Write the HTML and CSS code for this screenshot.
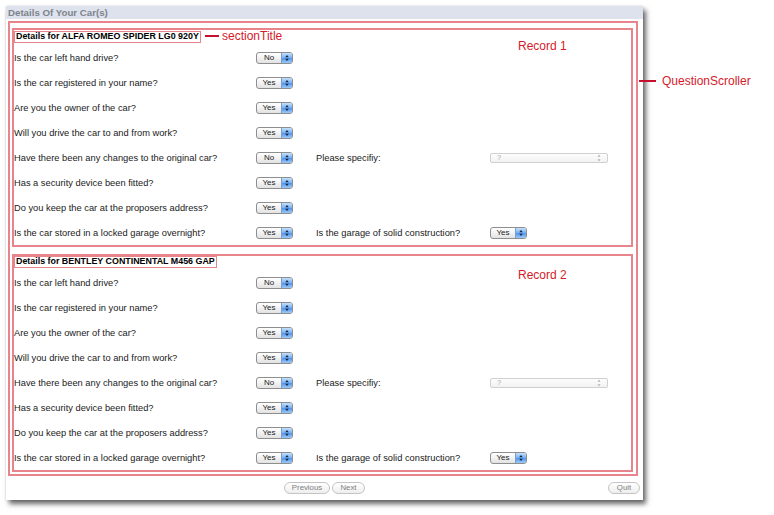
FILE: index.html
```html
<!DOCTYPE html>
<html>
<head>
<meta charset="utf-8">
<link rel="stylesheet" href="styles.css">
</head>
<body>
<div class="window">
  <div class="titlebar">Details Of Your Car(s)</div>
  <div class="scroller">
    <section class="record">
      <div class="rec-title">Details for ALFA ROMEO SPIDER LG0 920Y</div>
      <div class="row"><span class="q">Is the car left hand drive?</span><span class="sel"><span class="val">No</span><span class="step"><svg width="10" height="10" viewBox="0 0 10 10"><path d="M5 2 L3.2 4.2 H6.8 Z M3.2 5.8 H6.8 L5 8 Z" fill="#1c2b45"/></svg></span></span></div>
      <div class="row"><span class="q">Is the car registered in your name?</span><span class="sel"><span class="val">Yes</span><span class="step"><svg width="10" height="10" viewBox="0 0 10 10"><path d="M5 2 L3.2 4.2 H6.8 Z M3.2 5.8 H6.8 L5 8 Z" fill="#1c2b45"/></svg></span></span></div>
      <div class="row"><span class="q">Are you the owner of the car?</span><span class="sel"><span class="val">Yes</span><span class="step"><svg width="10" height="10" viewBox="0 0 10 10"><path d="M5 2 L3.2 4.2 H6.8 Z M3.2 5.8 H6.8 L5 8 Z" fill="#1c2b45"/></svg></span></span></div>
      <div class="row"><span class="q">Will you drive the car to and from work?</span><span class="sel"><span class="val">Yes</span><span class="step"><svg width="10" height="10" viewBox="0 0 10 10"><path d="M5 2 L3.2 4.2 H6.8 Z M3.2 5.8 H6.8 L5 8 Z" fill="#1c2b45"/></svg></span></span></div>
      <div class="row"><span class="q">Have there been any changes to the original car?</span><span class="sel"><span class="val">No</span><span class="step"><svg width="10" height="10" viewBox="0 0 10 10"><path d="M5 2 L3.2 4.2 H6.8 Z M3.2 5.8 H6.8 L5 8 Z" fill="#1c2b45"/></svg></span></span><span class="q2">Please specifiy:</span><span class="wide"><span class="wval">?</span><svg width="8" height="10" viewBox="0 0 8 10"><path d="M4 1.5 L2.5 3.8 H5.5 Z M2.5 6.2 H5.5 L4 8.5 Z" fill="#b4b4b4"/></svg></span></div>
      <div class="row"><span class="q">Has a security device been fitted?</span><span class="sel"><span class="val">Yes</span><span class="step"><svg width="10" height="10" viewBox="0 0 10 10"><path d="M5 2 L3.2 4.2 H6.8 Z M3.2 5.8 H6.8 L5 8 Z" fill="#1c2b45"/></svg></span></span></div>
      <div class="row"><span class="q">Do you keep the car at the proposers address?</span><span class="sel"><span class="val">Yes</span><span class="step"><svg width="10" height="10" viewBox="0 0 10 10"><path d="M5 2 L3.2 4.2 H6.8 Z M3.2 5.8 H6.8 L5 8 Z" fill="#1c2b45"/></svg></span></span></div>
      <div class="row"><span class="q">Is the car stored in a locked garage overnight?</span><span class="sel"><span class="val">Yes</span><span class="step"><svg width="10" height="10" viewBox="0 0 10 10"><path d="M5 2 L3.2 4.2 H6.8 Z M3.2 5.8 H6.8 L5 8 Z" fill="#1c2b45"/></svg></span></span><span class="q2">Is the garage of solid construction?</span><span class="sel"><span class="val">Yes</span><span class="step"><svg width="10" height="10" viewBox="0 0 10 10"><path d="M5 2 L3.2 4.2 H6.8 Z M3.2 5.8 H6.8 L5 8 Z" fill="#1c2b45"/></svg></span></span></div>
    </section>
    <section class="record record-next">
      <div class="rec-title">Details for BENTLEY CONTINENTAL M456 GAP</div>
      <div class="row"><span class="q">Is the car left hand drive?</span><span class="sel"><span class="val">No</span><span class="step"><svg width="10" height="10" viewBox="0 0 10 10"><path d="M5 2 L3.2 4.2 H6.8 Z M3.2 5.8 H6.8 L5 8 Z" fill="#1c2b45"/></svg></span></span></div>
      <div class="row"><span class="q">Is the car registered in your name?</span><span class="sel"><span class="val">Yes</span><span class="step"><svg width="10" height="10" viewBox="0 0 10 10"><path d="M5 2 L3.2 4.2 H6.8 Z M3.2 5.8 H6.8 L5 8 Z" fill="#1c2b45"/></svg></span></span></div>
      <div class="row"><span class="q">Are you the owner of the car?</span><span class="sel"><span class="val">Yes</span><span class="step"><svg width="10" height="10" viewBox="0 0 10 10"><path d="M5 2 L3.2 4.2 H6.8 Z M3.2 5.8 H6.8 L5 8 Z" fill="#1c2b45"/></svg></span></span></div>
      <div class="row"><span class="q">Will you drive the car to and from work?</span><span class="sel"><span class="val">Yes</span><span class="step"><svg width="10" height="10" viewBox="0 0 10 10"><path d="M5 2 L3.2 4.2 H6.8 Z M3.2 5.8 H6.8 L5 8 Z" fill="#1c2b45"/></svg></span></span></div>
      <div class="row"><span class="q">Have there been any changes to the original car?</span><span class="sel"><span class="val">No</span><span class="step"><svg width="10" height="10" viewBox="0 0 10 10"><path d="M5 2 L3.2 4.2 H6.8 Z M3.2 5.8 H6.8 L5 8 Z" fill="#1c2b45"/></svg></span></span><span class="q2">Please specifiy:</span><span class="wide"><span class="wval">?</span><svg width="8" height="10" viewBox="0 0 8 10"><path d="M4 1.5 L2.5 3.8 H5.5 Z M2.5 6.2 H5.5 L4 8.5 Z" fill="#b4b4b4"/></svg></span></div>
      <div class="row"><span class="q">Has a security device been fitted?</span><span class="sel"><span class="val">Yes</span><span class="step"><svg width="10" height="10" viewBox="0 0 10 10"><path d="M5 2 L3.2 4.2 H6.8 Z M3.2 5.8 H6.8 L5 8 Z" fill="#1c2b45"/></svg></span></span></div>
      <div class="row"><span class="q">Do you keep the car at the proposers address?</span><span class="sel"><span class="val">Yes</span><span class="step"><svg width="10" height="10" viewBox="0 0 10 10"><path d="M5 2 L3.2 4.2 H6.8 Z M3.2 5.8 H6.8 L5 8 Z" fill="#1c2b45"/></svg></span></span></div>
      <div class="row"><span class="q">Is the car stored in a locked garage overnight?</span><span class="sel"><span class="val">Yes</span><span class="step"><svg width="10" height="10" viewBox="0 0 10 10"><path d="M5 2 L3.2 4.2 H6.8 Z M3.2 5.8 H6.8 L5 8 Z" fill="#1c2b45"/></svg></span></span><span class="q2">Is the garage of solid construction?</span><span class="sel"><span class="val">Yes</span><span class="step"><svg width="10" height="10" viewBox="0 0 10 10"><path d="M5 2 L3.2 4.2 H6.8 Z M3.2 5.8 H6.8 L5 8 Z" fill="#1c2b45"/></svg></span></span></div>
    </section>
  </div>
  <div class="footer">
    <div class="nav">
      <span class="btn btn-prev">Previous</span>
      <span class="btn btn-next">Next</span>
    </div>
    <span class="btn btn-quit">Quit</span>
  </div>
</div>

<span class="anno-line line-section"></span>
<span class="anno anno-section">sectionTitle</span>
<span class="anno anno-rec1">Record 1</span>
<span class="anno anno-rec2">Record 2</span>
<span class="anno-line line-scroller"></span>
<span class="anno anno-scroller">QuestionScroller</span>
</body>
</html>
```

FILE: styles.css
```css
* { box-sizing: border-box; }

body {
  margin: 0;
  background: #ffffff;
  font-family: "Liberation Sans", Arial, sans-serif;
  font-size: 9px;
  color: #111;
  position: relative;
  width: 774px;
  height: 515px;
  overflow: hidden;
}

.window {
  margin: 6px 0 0 6px;
  width: 637px;
  height: 494px;
  background: #ffffff;
  box-shadow: 3px 4px 5px rgba(0, 0, 0, 0.6), 0 0 2px rgba(0, 0, 0, 0.15);
  display: flex;
  flex-direction: column;
}

.titlebar {
  height: 13px;
  background: #dde2ec;
  color: #7d828c;
  font-weight: bold;
  font-size: 9.7px;
  line-height: 13px;
  padding-left: 2px;
}

.scroller {
  margin: 2px 5px 0 2px;
  border: 2px solid #e8848b;
  padding: 5px 3px 0 2px;
  height: 455px;
}

.record {
  border: 2px solid #e8848b;
}

.record-next {
  margin-top: 7px;
}

.rec-title {
  display: block;
  width: max-content;
  margin: 1px 0 2px 0;
  border: 1.5px solid #e8848b;
  height: 12px;
  padding: 0 1px 0 1px;
  font-weight: bold;
  font-size: 8.9px;
  line-height: 9px;
  color: #000;
}

.record-next .rec-title {
  margin-top: 0;
}

.row {
  display: grid;
  grid-template-columns: 242px 37px 23px 174px auto;
  align-items: center;
  height: 25px;
  font-size: 9.3px;
  color: #1a1a1a;
}

.q2 {
  grid-column: 4;
}

.sel {
  display: flex;
  height: 12px;
  width: 37px;
  border: 1px solid #8e8e8e;
  border-radius: 3px;
  background: linear-gradient(#ffffff, #f2f2f2 50%, #e2e2e2);
  overflow: hidden;
}

.val {
  flex: 1;
  text-align: center;
  font-size: 8px;
  line-height: 10px;
  color: #222;
}

.step {
  width: 11px;
  height: 10px;
  background: linear-gradient(#c4e0fc, #7cb4f4 45%, #5596ec 55%, #9ccaf8);
  border-left: 1px solid #7d9dcb;
  display: flex;
  align-items: center;
  justify-content: center;
}

.step svg { display: block; }

.wide {
  display: flex;
  align-items: center;
  justify-content: space-between;
  width: 118px;
  height: 10px;
  border: 1px solid #d0d0d0;
  border-radius: 2px;
  background: linear-gradient(#fdfdfd, #f2f2f2);
  padding: 0 4px 0 6px;
}

.wval {
  font-size: 7.5px;
  color: #a8a8a8;
  line-height: 8px;
}

.wide svg { display: block; }

.footer {
  flex: 1;
  display: grid;
  grid-template-columns: 1fr auto 1fr;
  align-items: center;
}

.nav {
  grid-column: 2;
  display: flex;
  gap: 2px;
}

.btn {
  display: inline-block;
  height: 12px;
  border: 1px solid #c4c4c4;
  border-radius: 6px;
  background: linear-gradient(#ffffff, #eeeeee);
  color: #7e7e7e;
  font-size: 7.8px;
  line-height: 10px;
  text-align: center;
}

.btn-prev { width: 46px; }
.btn-next { width: 33px; }
.btn-quit {
  grid-column: 3;
  justify-self: end;
  width: 32px;
  margin-right: 3px;
}

.anno {
  position: absolute;
  font-family: "Liberation Sans", Arial, sans-serif;
  font-size: 12px;
  line-height: 14px;
  color: #d41a2a;
  white-space: nowrap;
}

.anno-line {
  position: absolute;
  height: 2px;
  background: #c8102e;
}

.line-section { left: 205px; top: 35px; width: 14px; }
.anno-section { left: 222px; top: 29px; }
.anno-rec1 { left: 518px; top: 39px; }
.anno-rec2 { left: 518px; top: 268px; }
.line-scroller { left: 639px; top: 80px; width: 17px; }
.anno-scroller { left: 662px; top: 74px; }
```
